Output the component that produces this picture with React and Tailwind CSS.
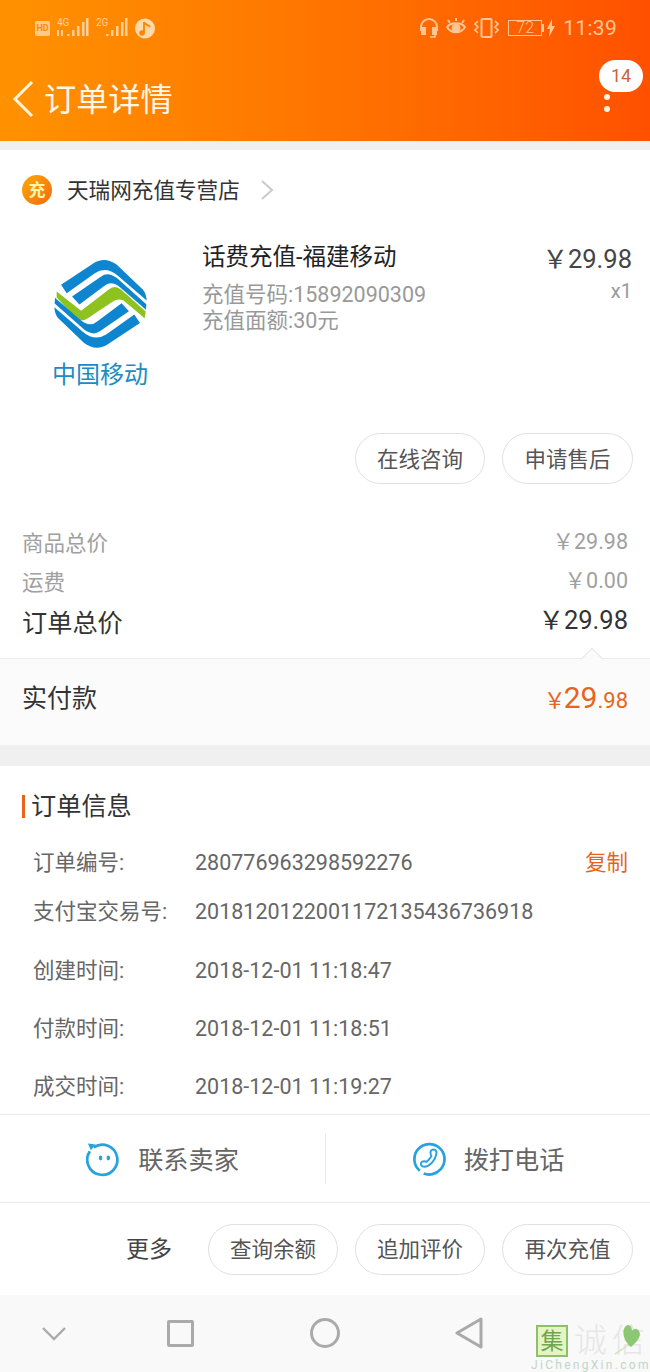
import React from "react";

const FONT = "font-['Roboto','Noto_Sans_CJK_SC',sans-serif]";

const StatusLeft = () => (
  <div className="flex items-center gap-[7px] text-[#ffd09a]">
    <span className="flex h-[15px] w-[15px] items-center justify-center rounded-[2px] bg-[#ffc98a] text-[9px] font-bold leading-none text-[#ff8c00]">
      HD
    </span>
    <svg width="32" height="20" viewBox="0 0 32 20" fill="currentColor">
      <text x="0" y="8" fontSize="10">4G</text>
      <rect x="0" y="12" width="2" height="6" />
      <rect x="4" y="12" width="2" height="6" />
      <rect x="10" y="16" width="2.5" height="2" />
      <rect x="15" y="12" width="2.5" height="6" />
      <rect x="20" y="8" width="2.5" height="10" />
      <rect x="25" y="4" width="2.5" height="14" />
      <rect x="29" y="0" width="2.5" height="18" />
    </svg>
    <svg width="32" height="20" viewBox="0 0 32 20" fill="currentColor">
      <text x="0" y="8" fontSize="10">2G</text>
      <rect x="10" y="16" width="2.5" height="2" />
      <rect x="15" y="12" width="2.5" height="6" />
      <rect x="20" y="8" width="2.5" height="10" />
      <rect x="25" y="4" width="2.5" height="14" />
      <rect x="29" y="0" width="2.5" height="18" />
    </svg>
    <svg width="20" height="21" viewBox="0 0 20 21">
      <circle cx="10" cy="10.5" r="10" fill="#ffd9a8" />
      <path d="M9 4c1 3 5 3 6 5M9 4v11" stroke="#ff8400" strokeWidth="1.8" fill="none" />
      <circle cx="7" cy="15" r="2.8" fill="#ff8400" />
    </svg>
  </div>
);

const StatusRight = () => (
  <div className="flex items-center text-[#ffc694]">
    <svg width="20" height="20" viewBox="0 0 20 20" fill="none" stroke="currentColor" strokeWidth="2">
      <path d="M2 13V9a8 8 0 0 1 16 0v4" />
      <rect x="3" y="10" width="3" height="6" fill="currentColor" />
      <rect x="14" y="10" width="3" height="6" fill="currentColor" />
      <path d="M16 16v3h-5" strokeWidth="1.5" />
    </svg>
    <svg className="ml-[6px]" width="22" height="20" viewBox="0 0 22 20" fill="none" stroke="currentColor" strokeWidth="2">
      <path d="M2 9c4-5 14-5 18 0-4 7-14 7-18 0z" />
      <circle cx="11" cy="10" r="3.5" fill="currentColor" />
      <path d="M5 5L3 2M11 3V0M17 5l2-3" />
    </svg>
    <svg className="ml-[7px]" width="25" height="20" viewBox="0 0 25 20" fill="none" stroke="currentColor" strokeWidth="1.6">
      <rect x="7.5" y="1" width="10" height="18" rx="1" strokeWidth="2" />
      <path d="M4 3L1 6l3 3-3 3 3 3M21 3l3 3-3 3 3 3-3 3" />
    </svg>
    <div className="ml-[9px] flex h-[16px] w-[34px] items-center justify-center border border-current text-[16px] font-light leading-none">72</div>
    <div className="h-[8px] w-[2px] bg-current" />
    <svg className="ml-[2px]" width="11" height="18" viewBox="0 0 11 18" fill="currentColor">
      <path d="M6 0L1 10h3l-1 8 6-11H6z" />
    </svg>
    <span className="ml-[6px] text-[21px] leading-none tracking-[0.3px]">11:39</span>
  </div>
);

const Header = () => (
  <div className="h-[141px] bg-gradient-to-r from-[#ff9200] to-[#ff5000]">
    <div className="flex h-[56px] items-center justify-between pl-[35px] pr-[33px]">
      <StatusLeft />
      <StatusRight />
    </div>
    <div className="flex h-[85px] items-center pl-[12px] pr-[7px]">
      <svg width="22" height="38" viewBox="0 0 22 38" fill="none" stroke="#fff3dd" strokeWidth="3">
        <path d="M20 2L3 19l17 17" />
      </svg>
      <h1 className="ml-[10px] pt-[2px] text-[32.2px] leading-[84px] text-[#fff7e8]">订单详情</h1>
      <div className="ml-auto flex flex-col items-center self-start pt-[4px]">
        <div className="flex h-[32px] w-[44px] items-center justify-center rounded-full bg-white text-[18px] leading-none text-[#c9653a]">14</div>
        <div className="mr-[29px] mt-[2px] h-[6px] w-[6px] rounded-full bg-[#fff3dd]" />
        <div className="mr-[29px] mt-[6px] h-[6px] w-[6px] rounded-full bg-[#fff3dd]" />
      </div>
    </div>
  </div>
);

const LOGO_BANDS = [
  "M45 105L140 42Q175 18 212 45L290 120Q300 132 301 152L215 78Q180 48 145 71L62 130Z",
  "M78 140L165 80Q185 65 212 85L300 163L299 180L222 113Q195 90 172 110L100 164Z",
];

const ChinaMobileLogo = () => (
  <div className="flex w-[96px] flex-col items-center">
    <svg width="93" height="92" viewBox="25 25 276 275">
      <path d="M32 125L105 183L190 118Q207 105 225 120L298 185L295 205L232 152Q215 145 200 155L125 205Q105 218 90 205L32 143Z" fill="#8dc21f" />
      <g fill="#0e86cf">
        {LOGO_BANDS.map((d) => <path key={d} d={d} />)}
      </g>
      <g fill="#0e86cf" transform="rotate(180 163 162)">
        {LOGO_BANDS.map((d) => <path key={d} d={d} />)}
      </g>
    </svg>
    <div className="mt-[11px] text-[24px] leading-[28px] text-[#1b8cc4]">中国移动</div>
  </div>
);

const OutlineButton = ({ children, className = "w-[130px]" }) => (
  <button className={`flex h-[51px] items-center justify-center rounded-full border border-[#e0e0e0] pt-[3px] text-[21.5px] text-[#555] ${className}`}>
    {children}
  </button>
);

const ShopCard = () => (
  <div className="h-[594px] bg-white">
    <div className="flex h-[80px] items-center pl-[22px]">
      <div className="flex h-[30px] w-[30px] items-center justify-center rounded-full bg-gradient-to-br from-[#ffa800] to-[#f06a10] text-[17px] font-bold leading-none text-[#fff3b0]">充</div>
      <span className="ml-[15px] pt-[2px] text-[21.6px] text-[#333]">天瑞网充值专营店</span>
      <svg className="ml-[20px]" width="14" height="22" viewBox="0 0 14 22" fill="none" stroke="#ccc" strokeWidth="2.2">
        <path d="M2 2l10 9-10 9" />
      </svg>
    </div>
    <div className="flex h-[203px] items-start pt-[28px]">
      <div className="ml-[52px]"><ChinaMobileLogo /></div>
      <div className="ml-[54px] flex-1">
        <div className="-mt-[17px] text-[23.5px] leading-[32px] text-[#222]">话费充值-福建移动</div>
        <div className="mt-[9px] text-[21.5px] leading-[26px] text-[#999]">充值号码:15892090309</div>
        <div className="text-[21.5px] leading-[25px] text-[#999]">充值面额:30元</div>
      </div>
      <div className="-mt-[15px] mr-[18px] text-right">
        <div className="text-[25.5px] leading-[32px] text-[#444]">￥29.98</div>
        <div className="mt-[3px] text-[20px] leading-[26px] text-[#999]">x1</div>
      </div>
    </div>
    <div className="flex justify-end gap-[17px] pr-[17px]">
      <OutlineButton>在线咨询</OutlineButton>
      <OutlineButton className="w-[131px]">申请售后</OutlineButton>
    </div>
    <div className="mt-[40px] px-[22px]">
      <div className="flex h-[39px] items-center justify-between text-[21.5px] text-[#a0a0a0]">
        <span className="pt-[2px]">商品总价</span><span className="pb-[2px]">￥29.98</span>
      </div>
      <div className="flex h-[39px] items-center justify-between text-[21.5px] text-[#a0a0a0]">
        <span className="pt-[2px]">运费</span><span className="pb-[2px]">￥0.00</span>
      </div>
      <div className="flex h-[40px] items-center justify-between text-[#333]">
        <span className="pt-[3px] text-[25.2px]">订单总价</span>
        <span className="pb-[4px] text-[25.5px]">￥29.98</span>
      </div>
    </div>
    <div className="relative mt-[16px] flex h-[87px] items-center justify-between border-t border-[#ececec] bg-[#fbfbfb] px-[22px] pb-[7px]">
      <div className="absolute right-[50px] -top-[8px] h-[16px] w-[16px] rotate-45 border-l border-t border-[#e6e6e6] bg-[#fbfbfb]" />
      <span className="text-[25px] text-[#333]">实付款</span>
      <span className="mb-[2px] flex items-baseline text-[#e8641b]">
        <span className="-mr-[2px] text-[22px]">￥</span>
        <span className="text-[30px]">29</span>
        <span className="text-[22px]">.98</span>
      </span>
    </div>
  </div>
);

const InfoRow = ({ label, value, height, action }) => (
  <div className={`flex items-center pl-[33px] pr-[22px] text-[21.5px] text-[#666] ${height}`}>
    <span className="w-[162px] shrink-0">{label}</span>
    <span>{value}</span>
    {action && <span className="ml-auto text-[#e8641b]">{action}</span>}
  </div>
);

const OrderInfo = () => (
  <div className="h-[348px] bg-white">
    <div className="flex h-[77px] items-center pl-[22px] pt-[4px]">
      <div className="h-[23px] w-[3px] bg-[#e8641b]" />
      <h2 className="ml-[6px] text-[25.2px] text-[#333]">订单信息</h2>
    </div>
    <InfoRow label="订单编号:" value="280776963298592276" action="复制" height="h-[40px]" />
    <InfoRow label="支付宝交易号:" value="2018120122001172135436736918" height="h-[59px]" />
    <InfoRow label="创建时间:" value="2018-12-01 11:18:47" height="h-[58px]" />
    <InfoRow label="付款时间:" value="2018-12-01 11:18:51" height="h-[58px]" />
    <InfoRow label="成交时间:" value="2018-12-01 11:19:27" height="h-[56px] pt-[2px]" />
  </div>
);

const ContactBar = () => (
  <div className="flex h-[89px] items-center border-y border-[#e8e8e8] bg-white pt-[1px] text-[25.2px] text-[#666]">
    <div className="flex h-[50px] w-[326px] items-center justify-center gap-[18px] border-r border-[#e8e8e8]">
      <svg width="34" height="35" viewBox="0 0 35 35" fill="none">
        <path d="M8 5A15.5 15.5 0 1 1 4 9" stroke="#27a2dc" strokeWidth="2.8" />
        <path d="M2 1l8 1-5 6z" fill="#27a2dc" />
        <ellipse cx="15" cy="16" rx="1.8" ry="2.5" fill="#27a2dc" />
        <ellipse cx="23" cy="16" rx="1.8" ry="2.5" fill="#27a2dc" />
      </svg>
      <span className="pt-[3px]">联系卖家</span>
    </div>
    <div className="flex h-[50px] w-[324px] items-center justify-center gap-[18px]">
      <svg width="34" height="35" viewBox="0 0 35 35" fill="none" stroke="#27a2dc" strokeWidth="2.8">
        <path d="M8 29A15.5 15.5 0 1 1 29 28a15.5 15.5 0 0 1-17 4" />
        <path d="M20 8c3-2 6 0 5 4-1 6-6 12-12 13-4 0-5-3-3-5 2-1 3-1 5 0 2-2 4-4 5-6-1-2-2-4 0-6z" strokeWidth="2" />
      </svg>
      <span className="pt-[3px]">拨打电话</span>
    </div>
  </div>
);

const MoreBar = () => (
  <div className="flex h-[92px] items-center justify-end gap-[17px] bg-white pr-[17px]">
    <span className="mr-[19px] pt-[3px] text-[23px] text-[#444]">更多</span>
    <OutlineButton>查询余额</OutlineButton>
    <OutlineButton>追加评价</OutlineButton>
    <OutlineButton className="w-[131px]">再次充值</OutlineButton>
  </div>
);

const NavBar = () => (
  <div className="relative flex h-[77px] items-center bg-[#f9f9f9] pb-[1px]">
    <div className="flex w-[108px] justify-center">
      <svg width="26" height="15" viewBox="0 0 26 15" fill="none" stroke="#aaa" strokeWidth="2.4">
        <path d="M2 2l11 11L24 2" />
      </svg>
    </div>
    <div className="ml-[59px] h-[27px] w-[27px] rounded-[2px] border-[3px] border-[#aaa]" />
    <div className="ml-[116px] h-[30px] w-[30px] rounded-full border-[3px] border-[#aaa]" />
    <svg className="ml-[115px]" width="28" height="32" viewBox="0 0 28 32" fill="none" stroke="#aaa" strokeWidth="3" strokeLinejoin="round">
      <path d="M26 2v28L2 16z" />
    </svg>
    {/* watermark */}
    <div className="absolute right-0 top-[30px] w-[119px]">
      <div className="flex h-[32px] items-center pl-[5px]">
        <div className="flex h-[32px] w-[32px] items-center justify-center border-2 border-[#8fbf6a] bg-[#e4f5c4] text-[23px] leading-none text-[#6fa64f]">集</div>
        <span className="ml-[6px] whitespace-nowrap text-[33px] font-light leading-[32px] tracking-[5px] text-[#e6e6e6]">诚信</span>
      </div>
      <svg className="absolute right-[5px] top-0" width="32" height="32" viewBox="0 0 32 32" fill="none">
        <path d="M2 29Q10 24 18 18" stroke="#cfe6c0" strokeWidth="1.5" />
        <path d="M18 22C8 14 9 1 15 0c3 0 4 3 4 6 2-3 5-3 7 0 3 5-2 11-8 16z" fill="#8cc874" />
      </svg>
      <div className="mt-[1px] whitespace-nowrap text-[12px] leading-[14px] tracking-[2.3px] text-[#bfd6c8]">JiChengXin.com</div>
    </div>
  </div>
);

export default function App() {
  return (
    <div className={`${FONT} h-[1372px] w-[650px] overflow-hidden bg-[#f0f0f0]`}>
      <Header />
      <div className="h-[9px]" />
      <ShopCard />
      <div className="h-[22px]" />
      <OrderInfo />
      <ContactBar />
      <MoreBar />
      <NavBar />
    </div>
  );
}
